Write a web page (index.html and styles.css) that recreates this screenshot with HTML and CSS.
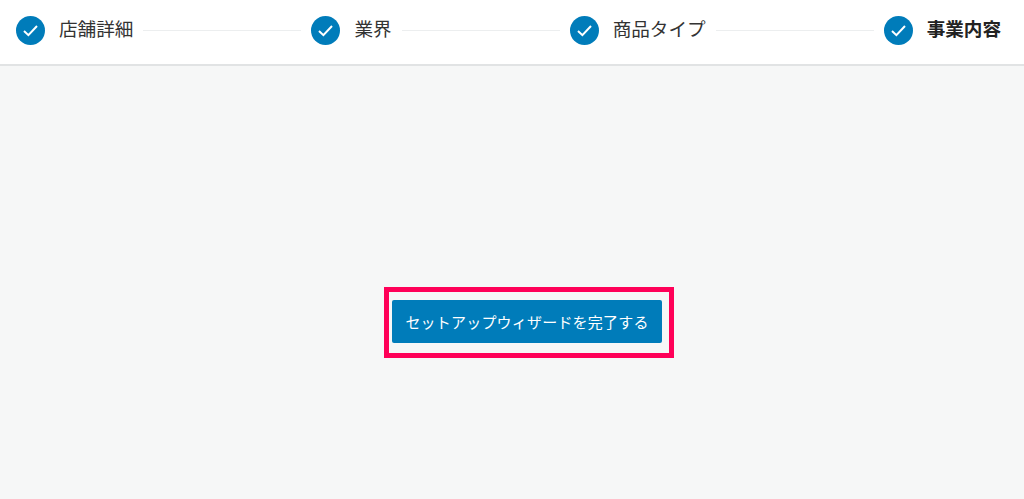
FILE: index.html
```html
<!DOCTYPE html>
<html lang="ja">
<head>
<meta charset="utf-8">
<title>セットアップウィザード</title>
<link rel="stylesheet" href="styles.css">
</head>
<body>
<header class="stepper">
  <div class="step">
    <svg class="check" viewBox="0 0 29 29"><circle cx="14.5" cy="14.5" r="14.5" fill="#007cba"/><path d="M8 15l4.4 4.2L21 10" fill="none" stroke="#fff" stroke-width="2"/></svg>
    <span class="label">店舗詳細</span>
  </div>
  <div class="line"></div>
  <div class="step">
    <svg class="check" viewBox="0 0 29 29"><circle cx="14.5" cy="14.5" r="14.5" fill="#007cba"/><path d="M8 15l4.4 4.2L21 10" fill="none" stroke="#fff" stroke-width="2"/></svg>
    <span class="label">業界</span>
  </div>
  <div class="line"></div>
  <div class="step">
    <svg class="check" viewBox="0 0 29 29"><circle cx="14.5" cy="14.5" r="14.5" fill="#007cba"/><path d="M8 15l4.4 4.2L21 10" fill="none" stroke="#fff" stroke-width="2"/></svg>
    <span class="label">商品タイプ</span>
  </div>
  <div class="line"></div>
  <div class="step">
    <svg class="check" viewBox="0 0 29 29"><circle cx="14.5" cy="14.5" r="14.5" fill="#007cba"/><path d="M8 15l4.4 4.2L21 10" fill="none" stroke="#fff" stroke-width="2"/></svg>
    <span class="label label-current">事業内容</span>
  </div>
</header>
<main class="content">
  <div class="highlight">
    <button class="finish" type="button">セットアップウィザードを完了する</button>
  </div>
</main>
</body>
</html>
```
FILE: styles.css
```css
* { box-sizing: border-box; }
html, body { height: 100%; }
body {
  margin: 0;
  display: flex;
  flex-direction: column;
  background: #f6f7f7;
  font-family: "Liberation Sans", "Noto Sans CJK JP", sans-serif;
  overflow: hidden;
}
.stepper {
  height: 66px;
  flex: none;
  display: flex;
  align-items: center;
  gap: 10px;
  padding: 0 23px 4px 16px;
  background: #fff;
  border-bottom: 2px solid #e1e3e4;
}
.step {
  display: flex;
  align-items: center;
  gap: 14px;
  flex: none;
}
.check { width: 29px; height: 29px; display: block; flex: none; }
.label {
  font-size: 18.6px;
  line-height: 28px;
  color: #333;
  white-space: nowrap;
}
.label-current { font-weight: 700; color: #222; }
.line {
  flex: 1;
  height: 1px;
  background: #eceeef;
}
.content {
  flex: 1;
  padding: 221px 0 0 384px;
}
.highlight {
  width: 290px;
  height: 71px;
  padding: 8px 0 0 3px;
  border: 5px solid #ff0058;
}
.finish {
  display: block;
  width: 270px;
  height: 43px;
  padding: 0;
  border: 0;
  border-radius: 2px;
  background: #007cba;
  color: #fff;
  font-family: inherit;
  font-size: 15px;
  letter-spacing: 0.2px;
}
```
